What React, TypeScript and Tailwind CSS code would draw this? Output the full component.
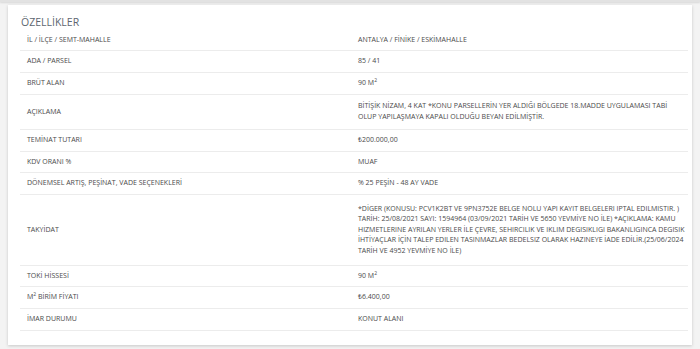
import type { ReactNode } from "react";

const Sq = () => <span className="text-[5px] leading-[0] align-[3px]">2</span>;

const rows: { label: ReactNode; value: ReactNode; pad?: string }[] = [
  { label: "İL / İLÇE / SEMT-MAHALLE", value: "ANTALYA / FİNİKE / ESKİMAHALLE" },
  { label: "ADA / PARSEL", value: "85 / 41" },
  { label: "BRÜT ALAN", value: <>90 M<Sq /></> },
  {
    label: "AÇIKLAMA",
    value: (
      <>
        BİTİŞİK NİZAM, 4 KAT *KONU PARSELLERİN YER ALDIĞI BÖLGEDE 18.MADDE UYGULAMASI TABİ
        <br />
        OLUP YAPILAŞMAYA KAPALI OLDUĞU BEYAN EDİLMİŞTİR.
      </>
    ),
    pad: "py-[6.5px]",
  },
  { label: "TEMİNAT TUTARI", value: "₺200.000,00" },
  { label: "KDV ORANI %", value: "MUAF" },
  { label: "DÖNEMSEL ARTIŞ, PEŞİNAT, VADE SEÇENEKLERİ", value: "% 25 PEŞİN - 48 AY VADE" },
  {
    label: "TAKYİDAT",
    value:
      "*DİGER (KONUSU: PCV1K2BT VE 9PN3752E BELGE NOLU YAPI KAYIT BELGELERI IPTAL EDILMISTIR. ) TARİH: 25/08/2021 SAYI: 1594964 (03/09/2021 TARİH VE 5650 YEVMİYE NO İLE) *AÇIKLAMA: KAMU HIZMETLERINE AYRILAN YERLER İLE ÇEVRE, SEHIRCILIK VE IKLIM DEGISIKLIGI BAKANLIGINCA DEGISIK İHTİYAÇLAR İÇİN TALEP EDILEN TASINMAZLAR BEDELSIZ OLARAK HAZINEYE İADE EDİLİR.(25/06/2024 TARİH VE 4952 YEVMİYE NO İLE)",
    pad: "py-[8.5px]",
  },
  { label: "TOKİ HİSSESİ", value: <>90 M<Sq /></> },
  { label: <>M<Sq /> BİRİM FİYATI</>, value: "₺6.400,00" },
  { label: "İMAR DURUMU", value: "KONUT ALANI" },
];

const App = () => {
  return (
    <div className="w-[700px] h-[349px] bg-[#f3f3f3] overflow-hidden font-['Open_Sans',sans-serif]">
      {/* bottom edge of the card above */}
      <div className="h-[2px] bg-[#e2e2e2] shadow-[0_1px_2px_rgba(0,0,0,0.12)]" />
      <div className="mx-[8px] mt-[3px] w-[684px] bg-white shadow-[0_1px_3px_rgba(0,0,0,0.18)] pl-[12px] pr-[4px] pt-[10px] pb-[14px]">
        <h3 className="text-[10.5px] leading-[14.5px] text-[#5d6670] pl-[1px]">ÖZELLİKLER</h3>
        <table className="w-[668px] table-fixed border-collapse text-[7px] leading-[10.5px] text-[#4a4a4a]">
          <tbody>
            {rows.map((row, i) => (
              <tr key={i} className="border-b border-[#ececec]">
                <td className={`w-[332px] align-middle px-[7px] ${row.pad ?? "py-[5.125px]"}`}>
                  {row.label}
                </td>
                <td className={`align-middle pl-[6px] pr-0 ${row.pad ?? "py-[5.125px]"}`}>
                  {row.value}
                </td>
              </tr>
            ))}
          </tbody>
        </table>
      </div>
    </div>
  );
};

export default App;
